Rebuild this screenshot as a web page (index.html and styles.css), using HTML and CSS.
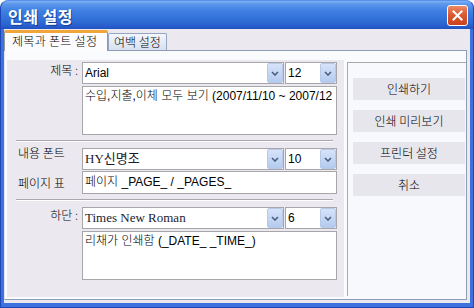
FILE: index.html
```html
<html>
    <head>
        <meta charset="utf-8">
        <link rel="stylesheet" href="styles.css">
    </head>
    <body>
        <div class="window">
            <div class="titlebar">
                <span class="title">인쇄 설정</span>
                <span class="close">
                    <svg width="11" height="11" viewBox="0 0 11 11">
                        <path d="M1.5 1.5l8 8M9.5 1.5l-8 8" stroke="#fff" stroke-width="2" stroke-linecap="square"/>
                    </svg>
                </span>
            </div>
            <div class="client">
                <div class="tabs">
                    <div class="tab active">제목과 폰트 설정</div>
                    <div class="tab">여백 설정</div>
                </div>
                <div class="panel">
                    <div class="settings">
                        <!-- title -->
                        <div class="line">
                            <div class="label right">제목 :</div>
                            <div class="combo font-combo">
                                <span class="value">Arial</span>
                                <span class="arrow"><svg width="8" height="5" viewBox="0 0 8 5"><path d="M1 1l3 3 3-3" fill="none" stroke="#4d5f80" stroke-width="1.6"/></svg></span>
                            </div>
                            <div class="combo size-combo">
                                <span class="value">12</span>
                                <span class="arrow"><svg width="8" height="5" viewBox="0 0 8 5"><path d="M1 1l3 3 3-3" fill="none" stroke="#4d5f80" stroke-width="1.6"/></svg></span>
                            </div>
                        </div>
                        <div class="line">
                            <div class="label"></div>
                            <div class="memo">수입,지출,이체 모두 보기 (2007/11/10 ~ 2007/12</div>
                        </div>
                        <div class="sep"></div>

                        <!-- body font -->
                        <div class="line">
                            <div class="label left up">내용 폰트</div>
                            <div class="combo font-combo">
                                <span class="value serif">HY신명조</span>
                                <span class="arrow"><svg width="8" height="5" viewBox="0 0 8 5"><path d="M1 1l3 3 3-3" fill="none" stroke="#4d5f80" stroke-width="1.6"/></svg></span>
                            </div>
                            <div class="combo size-combo">
                                <span class="value">10</span>
                                <span class="arrow"><svg width="8" height="5" viewBox="0 0 8 5"><path d="M1 1l3 3 3-3" fill="none" stroke="#4d5f80" stroke-width="1.6"/></svg></span>
                            </div>
                        </div>
                        <div class="line tight">
                            <div class="label left mid">페이지 표</div>
                            <div class="input">페이지 _PAGE_ / _PAGES_</div>
                        </div>
                        <div class="sep"></div>

                        <!-- footer -->
                        <div class="line">
                            <div class="label right">하단 :</div>
                            <div class="combo font-combo">
                                <span class="value serif">Times New Roman</span>
                                <span class="arrow"><svg width="8" height="5" viewBox="0 0 8 5"><path d="M1 1l3 3 3-3" fill="none" stroke="#4d5f80" stroke-width="1.6"/></svg></span>
                            </div>
                            <div class="combo size-combo">
                                <span class="value">6</span>
                                <span class="arrow"><svg width="8" height="5" viewBox="0 0 8 5"><path d="M1 1l3 3 3-3" fill="none" stroke="#4d5f80" stroke-width="1.6"/></svg></span>
                            </div>
                        </div>
                        <div class="line">
                            <div class="label"></div>
                            <div class="memo">리채가 인쇄함 (_DATE_ _TIME_)</div>
                        </div>
                    </div>
                    <div class="actions">
                        <div class="button">인쇄하기</div>
                        <div class="button">인쇄 미리보기</div>
                        <div class="button">프린터 설정</div>
                        <div class="button">취소</div>
                    </div>
                </div>
            </div>
        </div>
    </body>
</html>
```

FILE: styles.css
```css
body {
    margin: 0;
    background: #fff;
    font-family: "Liberation Sans", "Noto Sans CJK KR", sans-serif;
    font-size: 12px;
    font-weight: 300;
    color: #000;
}
.window {
    width: 474px;
    height: 308px;
    box-sizing: border-box;
    display: flex;
    flex-direction: column;
    background: #3d72dc;
    border: 1px solid #1d47b6;
    border-top-color: #5a90ec;
    border-radius: 8px 8px 0 0;
    overflow: hidden;
}
.titlebar {
    height: 28px;
    flex: none;
    display: flex;
    align-items: center;
    justify-content: space-between;
    padding: 0 5px 0 7px;
    background: linear-gradient(#7eb3f3 0%, #5d98ec 10%, #3f7fe2 35%, #3473da 60%, #2a63cf 85%, #2152c0 100%);
}
.title {
    color: #fff;
    font-family: "Noto Sans CJK KR", sans-serif;
    font-size: 16px;
    font-weight: bold;
    letter-spacing: 0.5px;
    text-shadow: 1px 1px 0 #1a3f95;
    margin-top: 1px;
}
.close {
    width: 21px;
    height: 21px;
    box-sizing: border-box;
    border: 1px solid #fff;
    border-radius: 3px;
    background: linear-gradient(#ec8a66, #dd5a30 45%, #c9421d);
    display: flex;
    align-items: center;
    justify-content: center;
    margin-top: 1px;
}
.client {
    flex: 1;
    display: flex;
    flex-direction: column;
    margin: 0 3px 4px;
    background: #ebe9ef;
}
.tabs {
    height: 21px;
    flex: none;
    display: flex;
    align-items: flex-end;
}
.tab {
    height: 16px;
    padding: 0 5px;
    line-height: 16px;
    font-family: "Noto Sans CJK KR", sans-serif;
    border: 1px solid #93a5c2;
    border-bottom: none;
    border-radius: 2px 2px 0 0;
    background: linear-gradient(#f4f7fc, #d7e0ef);
}
.tab.active {
    position: relative;
    z-index: 1;
    height: 18px;
    width: 95px;
    padding: 0 0 0 7px;
    line-height: 16px;
    margin-bottom: -1px;
    letter-spacing: 0.3px;
    border-color: #919b9c;
    border-top: 3px solid #f0a53a;
    background: #fcfcfe;
}
.panel {
    flex: 1;
    display: flex;
    margin: 0 3px 3px 0;
    background: #fafbfd;
    border: 1px solid #8e9cb5;
    border-left-color: #dfe5f0;
}
.settings {
    width: 337px;
    margin: 9px 0 2px 2px;
    padding-top: 2px;
    background: #ebe9ef;
}
.line {
    display: flex;
    gap: 1px;
    margin-bottom: 2px;
}
.line.tight {
    margin-top: -1px;
}
.label {
    width: 74px;
    flex: none;
    box-sizing: border-box;
    line-height: 16px;
    font-family: "Noto Sans CJK KR", sans-serif;
    white-space: nowrap;
}
.label.right {
    text-align: right;
    padding-right: 3px;
}
.label.left {
    padding-left: 11px;
}
.label.up {
    margin-top: -3px;
}
.label.mid {
    line-height: 23px;
}
.combo {
    height: 22px;
    box-sizing: border-box;
    display: flex;
    border: 1px solid #a7a6ab;
    background: #fff;
}
.font-combo {
    width: 202px;
}
.size-combo {
    width: 52px;
}
.value {
    flex: 1;
    padding-left: 2px;
    line-height: 20px;
    font-weight: normal;
    white-space: nowrap;
    overflow: hidden;
}
.value.serif {
    font-family: "Liberation Serif", "Noto Sans CJK KR", serif;
    font-size: 13px;
    color: #1c1c30;
}
.arrow {
    width: 16px;
    box-sizing: border-box;
    border: 1px solid #b8c9e8;
    border-radius: 2px;
    background: linear-gradient(#d6e3f9, #b4cbef);
    display: flex;
    align-items: center;
    justify-content: center;
}
.memo,
.input {
    width: 255px;
    box-sizing: border-box;
    border: 1px solid #a7a6ab;
    background: #fff;
    padding: 1px 2px;
    white-space: nowrap;
    overflow: hidden;
    line-height: 16px;
}
.memo {
    height: 49px;
}
.input {
    height: 23px;
    line-height: 19px;
}
.sep {
    height: 1px;
    margin: 5px 11px 6px 9px;
    background: #a9a8ad;
    border-bottom: 1px solid #fff;
}
.actions {
    flex: 1;
    margin: 11px 0 3px 3px;
    padding: 15px 1px 0 5px;
    border-left: 1px solid #a9a8ad;
    border-top: 1px solid #a9a8ad;
    background: #f8f9fc;
    display: flex;
    flex-direction: column;
    gap: 10px;
}
.button {
    height: 22px;
    line-height: 22px;
    text-align: center;
    font-family: "Noto Sans CJK KR", sans-serif;
    background: #e8e6ed;
}
```
